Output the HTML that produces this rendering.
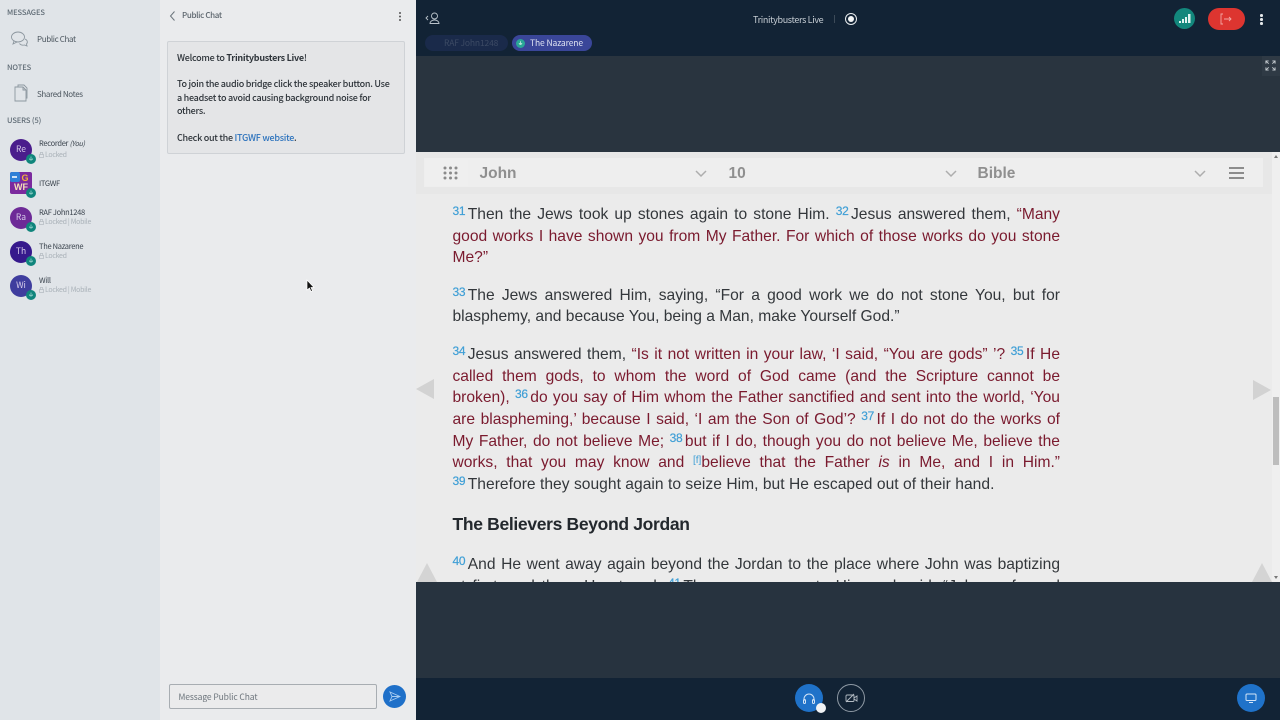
<!DOCTYPE html>
<html><head><meta charset="utf-8">
<style>
*{box-sizing:border-box}
html,body{margin:0;padding:0;width:1280px;height:720px;overflow:hidden;background:#06172a}
body{font-family:"Noto Sans CJK SC","Liberation Sans",sans-serif;position:relative}
.a{position:absolute;white-space:nowrap}
#side{position:absolute;left:0;top:0;width:160px;height:720px;background:#e0e4e8}
#chat{position:absolute;left:160px;top:0;width:256px;height:720px;background:#eaebed}
#top{position:absolute;left:416px;top:0;width:864px;height:56px;background:#122335}
#mid{position:absolute;left:416px;top:56px;width:864px;height:96px;background:#29343f}
#pres{position:absolute;left:416px;top:152px;width:864px;height:430px;background:#ebebeb;overflow:hidden}
#low{position:absolute;left:416px;top:582px;width:864px;height:96px;background:#27333f}
#bot{position:absolute;left:416px;top:678px;width:864px;height:42px;background:#122335}
.h{font-size:7.5px;color:#5f6b75;font-weight:500;letter-spacing:-.1px;margin-top:-1px}
.n{font-size:7.5px;color:#39424c;letter-spacing:-.3px;margin-top:-1px}
.l{font-size:7px;color:#a9b1b8;letter-spacing:-.3px;margin-top:-1px}
.l svg{vertical-align:-1px;margin-right:1px}
.m{font-size:8px;color:#4a545d;letter-spacing:-.35px}
.av{position:absolute;left:10px;width:22px;height:22px;border-radius:50%;color:#d8cdea;font-size:8.5px;text-align:center;line-height:21px}
.bd{position:absolute;left:25.5px;width:10px;height:10px}
.v{position:absolute;left:36.5px;width:607.5px;height:22px;line-height:22px;margin-top:-1px;font-family:"Liberation Sans",sans-serif;font-size:15.6px;text-align:justify;text-align-last:justify;white-space:nowrap;color:#33373b}
.v.e{text-align-last:left}
.r{color:#7a1a2e}
.s{color:#3f9fd6;font-size:12px;letter-spacing:-.3px;vertical-align:4px;line-height:0;margin-right:2.5px;-webkit-text-stroke:.2px #3f9fd6}
.sel{position:absolute;top:8px;height:26px;background:#eeeeee;font-family:"Liberation Sans",sans-serif;font-weight:700;font-size:15.5px;color:#8f8f8f;line-height:27px;padding-left:8.5px}
</style></head>
<body>
<div id="side">
<div class="a h" style="left:7px;top:7.5px">MESSAGES</div>
<svg class="a" style="left:10px;top:30px" width="20" height="18" viewBox="0 0 20 18" fill="none" stroke="#8d979f" stroke-width=".9"><ellipse cx="8" cy="7" rx="6.5" ry="5"/><path d="M4 11l-1 3 4-2"/><path d="M15 9c2.5 1 3 3.5 1.5 5l.5 2-2.5-1c-2 .5-4-.2-5-1.5"/></svg>
<div class="a m" style="left:37px;top:33.5px">Public Chat</div>
<div class="a h" style="left:7px;top:63px">NOTES</div>
<svg class="a" style="left:13px;top:84px" width="16" height="18" viewBox="0 0 16 18" fill="none" stroke="#8d979f" stroke-width=".9"><path d="M2 3h8l3 3v11H2z"/><path d="M5 3V1h6l3 3v10h-1"/><path d="M10 3v3h3"/></svg>
<div class="a m" style="left:37px;top:89px">Shared Notes</div>
<div class="a h" style="left:7px;top:115.5px">USERS (5)</div>

<div class="av" style="top:138.5px;background:#4a1d8c">Re</div>
<svg class="bd" style="top:153.5px" viewBox="0 0 10 10"><circle cx="5" cy="5" r="5" fill="#10857c"/><path d="M3.5 4.500a1.500 1.500 0 0 0 3 0M5 2.500v3.500" stroke="#a8dcd6" stroke-width=".7" fill="none"/></svg>
<div class="a n" style="left:39px;top:138.5px">Recorder <i style="font-size:7px">(You)</i></div>
<div class="a l" style="left:39px;top:151px"><svg width="5" height="6" viewBox="0 0 5 6" fill="none" stroke="#a9b1b8" stroke-width=".6"><rect x=".5" y="2.500" width="4" height="3"/><path d="M1.200 2.500V1.500a1.300 1.300 0 0 1 2.600 0v1"/></svg>Locked</div>

<div class="a" style="left:10px;top:172px;width:22px;height:22px;background:#7b2a9e;border-radius:2px;color:#f2b33a;font:700 9px/9px 'Liberation Sans',sans-serif;text-align:center;padding-top:2px"><span style="padding-left:8px">G</span><br><span style="color:#f6e3b8">WF</span></div>
<div class="a" style="left:9.5px;top:171.5px;width:10px;height:10px;background:#2f7fd6;border-radius:2px"></div><div class="a" style="left:12px;top:175.5px;width:5px;height:2px;background:#cfe2f6"></div>
<svg class="bd" style="top:187.5px" viewBox="0 0 10 10"><circle cx="5" cy="5" r="5" fill="#10857c"/><path d="M3.5 4.500a1.500 1.500 0 0 0 3 0M5 2.500v3.500" stroke="#a8dcd6" stroke-width=".7" fill="none"/></svg>
<div class="a n" style="left:39px;top:178.5px">ITGWF</div>

<div class="av" style="top:206.5px;background:#6d2a97">Ra</div>
<svg class="bd" style="top:221.5px" viewBox="0 0 10 10"><circle cx="5" cy="5" r="5" fill="#10857c"/><path d="M3.5 4.500a1.500 1.500 0 0 0 3 0M5 2.500v3.500" stroke="#a8dcd6" stroke-width=".7" fill="none"/></svg>
<div class="a n" style="left:39px;top:207.5px">RAF John1248</div>
<div class="a l" style="left:39px;top:218px"><svg width="5" height="6" viewBox="0 0 5 6" fill="none" stroke="#a9b1b8" stroke-width=".6"><rect x=".5" y="2.500" width="4" height="3"/><path d="M1.200 2.500V1.500a1.300 1.300 0 0 1 2.600 0v1"/></svg>Locked | Mobile</div>

<div class="av" style="top:240.5px;background:#36198c">Th</div>
<svg class="bd" style="top:255.5px" viewBox="0 0 10 10"><circle cx="5" cy="5" r="5" fill="#10857c"/><path d="M3.5 4.500a1.500 1.500 0 0 0 3 0M5 2.500v3.500" stroke="#a8dcd6" stroke-width=".7" fill="none"/></svg>
<div class="a n" style="left:39px;top:241.5px">The Nazarene</div>
<div class="a l" style="left:39px;top:252px"><svg width="5" height="6" viewBox="0 0 5 6" fill="none" stroke="#a9b1b8" stroke-width=".6"><rect x=".5" y="2.500" width="4" height="3"/><path d="M1.200 2.500V1.500a1.300 1.300 0 0 1 2.600 0v1"/></svg>Locked</div>

<div class="av" style="top:274.5px;background:#3f3d9e">Wi</div>
<svg class="bd" style="top:289.5px" viewBox="0 0 10 10"><circle cx="5" cy="5" r="5" fill="#10857c"/><path d="M3.5 4.500a1.500 1.500 0 0 0 3 0M5 2.500v3.500" stroke="#a8dcd6" stroke-width=".7" fill="none"/></svg>
<div class="a n" style="left:39px;top:276px">Will</div>
<div class="a l" style="left:39px;top:286px"><svg width="5" height="6" viewBox="0 0 5 6" fill="none" stroke="#a9b1b8" stroke-width=".6"><rect x=".5" y="2.500" width="4" height="3"/><path d="M1.200 2.500V1.500a1.300 1.300 0 0 1 2.600 0v1"/></svg>Locked | Mobile</div>
</div>

<div id="chat">
<svg class="a" style="left:9px;top:10px" width="7" height="12" viewBox="0 0 7 12" fill="none" stroke="#6b747c"><path d="M5.500 1.500L1.500 6l4 4.500"/></svg>
<div class="a" style="left:22px;top:10px;font-size:8px;letter-spacing:-.35px;color:#5b646c;font-weight:500">Public Chat</div>
<div class="a" style="left:239px;top:12px;width:2px;height:2px;background:#555;box-shadow:0 3.5px 0 #555,0 7px 0 #555;border-radius:50%"></div>
<div class="a" style="left:7px;top:41px;width:238px;height:113px;background:#e4e5e7;border:1px solid #cfd2d6;border-radius:2px"></div>
<div class="a" style="left:17px;top:50.5px;font-size:9px;letter-spacing:-.27px;line-height:13.4px;color:#2e343a;font-weight:500">Welcome to <b>Trinitybusters Live</b>!<br><br>To join the audio bridge click the speaker button. Use<br>a headset to avoid causing background noise for<br>others.<br><br>Check out the <span style="color:#2d73bd">ITGWF website</span>.</div>
<div class="a" style="left:9px;top:684px;width:208px;height:25px;background:#ebebec;border:1.5px solid #a8adb2;border-radius:2px;font-size:8.5px;letter-spacing:-.1px;line-height:24px;color:#6d757c;padding-left:8.5px">Message Public Chat</div>
<div class="a" style="left:223px;top:685px;width:23px;height:23px;border-radius:50%;background:#1f70c9"></div>
<svg class="a" style="left:229px;top:691px" width="12" height="11" viewBox="0 0 12 11" fill="none" stroke="#a9cdf2" stroke-width=".9"><path d="M1 1l10 4.500L1 10l2-4.500zM3 5.500h8"/></svg>
</div>

<div id="top">
<svg class="a" style="left:9px;top:11px" width="16" height="14" viewBox="0 0 16 14" fill="none" stroke="#b9c2ca" stroke-width=".9"><path d="M3 5L1 7l2 2"/><circle cx="9.5" cy="5" r="3"/><path d="M5 12.500c0-2 2-3.500 4.500-3.500s4.500 1.500 4.500 3.500z"/></svg>
<div class="a" style="left:337px;top:13px;font-size:9px;letter-spacing:-.35px;color:#c5ccd3">Trinitybusters Live</div>
<div class="a" style="left:418px;top:15px;width:1px;height:8px;background:#3c4a58"></div>
<div class="a" style="left:429px;top:13px;width:12px;height:12px;border-radius:50%;border:1.5px solid #e8ecef"></div>
<div class="a" style="left:432px;top:16px;width:6px;height:6px;border-radius:50%;background:#f3f5f6"></div>
<div class="a" style="left:9px;top:35px;width:83px;height:16px;border-radius:8px;background:#1a2a4a;font-size:8.5px;letter-spacing:-.15px;line-height:16px;color:#3c4a64;padding-left:19px">RAF John1248</div>
<div class="a" style="left:95.5px;top:35px;width:80.5px;height:16px;border-radius:8px;background:#3a4699;font-size:8.5px;letter-spacing:-.1px;line-height:16px;color:#dfe3f2;padding-left:18.5px">The Nazarene</div>
<svg class="a" style="left:100px;top:39px" width="9" height="9" viewBox="0 0 10 10"><circle cx="5" cy="5" r="5" fill="#2aa796"/><path d="M3.5 4.500a1.500 1.500 0 0 0 3 0M5 2.500v3.500" stroke="#d5f0ec" stroke-width=".8" fill="none"/></svg>
<div class="a" style="left:758px;top:8px;width:21px;height:21px;border-radius:50%;background:#12877c"></div>
<svg class="a" style="left:762px;top:13px" width="13" height="12" viewBox="0 0 13 12" fill="#dff3f0"><rect x="1" y="8" width="2" height="2"/><rect x="4" y="6" width="2" height="4"/><rect x="7" y="4" width="2" height="6"/><rect x="10" y="1" width="2.5" height="9"/></svg>
<div class="a" style="left:792px;top:8px;width:37px;height:22px;border-radius:11px;background:#dd3530"></div>
<svg class="a" style="left:803px;top:13px" width="15" height="12" viewBox="0 0 15 12" fill="none" stroke="#f3a7a4" stroke-width=".9"><path d="M4 1H2v10h2M5 6h7M10 4l2 2-2 2"/></svg>
<div class="a" style="left:844px;top:14px;width:2.5px;height:2.5px;border-radius:50%;background:#e3e7ea;box-shadow:0 4px 0 #e3e7ea,0 8px 0 #e3e7ea"></div>
</div>

<div id="mid">
<div class="a" style="left:846px;top:0;width:18px;height:20px;background:#2f3a45"></div>
<svg class="a" style="left:849px;top:4px" width="11" height="11" viewBox="0 0 12 12" fill="none" stroke="#c6ccd1" stroke-width="1"><path d="M1 4V1h3M8 1h3v3M11 8v3H8M4 11H1V8M1 1l3 3M11 1L8 4M11 11L8 8M1 11l3-3"/></svg>
</div>

<div id="pres">
<div class="a" style="left:0;top:0;width:856px;height:42px;background:#e7e7e7"></div>
<div class="a" style="left:8px;top:6px;width:839px;height:29px;background:#eeeeee"></div>
<div class="a" style="left:9px;top:8px;width:43px;height:26px;background:#efefef"></div>
<svg class="a" style="left:26px;top:14px" width="17" height="14" viewBox="0 0 17 14" fill="#8a8a8a"><circle cx="3" cy="2" r="1.5"/><circle cx="8.5" cy="2" r="1.5"/><circle cx="14" cy="2" r="1.5"/><circle cx="3" cy="7" r="1.5"/><circle cx="8.5" cy="7" r="1.5"/><circle cx="14" cy="7" r="1.5"/><circle cx="3" cy="12" r="1.5"/><circle cx="8.5" cy="12" r="1.5"/><circle cx="14" cy="12" r="1.5"/></svg>
<div class="sel" style="left:55px;width:246px">John</div>
<div class="sel" style="left:304px;width:246px">10</div>
<div class="sel" style="left:553px;width:248px">Bible</div>
<svg class="a" style="left:279px;top:17.5px" width="12" height="8" viewBox="0 0 12 8" fill="none" stroke="#adadad" stroke-width="1.5"><path d="M1 1l5 5 5-5"/></svg>
<svg class="a" style="left:529px;top:17.5px" width="12" height="8" viewBox="0 0 12 8" fill="none" stroke="#adadad" stroke-width="1.5"><path d="M1 1l5 5 5-5"/></svg>
<svg class="a" style="left:778px;top:17.5px" width="12" height="8" viewBox="0 0 12 8" fill="none" stroke="#adadad" stroke-width="1.5"><path d="M1 1l5 5 5-5"/></svg>
<div class="a" style="left:813px;top:15px;width:15px;height:2px;background:#8c8c8c;box-shadow:0 5px 0 #8c8c8c,0 10px 0 #8c8c8c"></div>

<div class="v" style="top:52.5px"><span class="s">31</span>Then the Jews took up stones again to stone Him. <span class="s">32</span>Jesus answered them, <span class="r">“Many</span></div>
<div class="v r" style="top:74.5px">good works I have shown you from My Father. For which of those works do you stone</div>
<div class="v r e" style="top:96px">Me?”</div>
<div class="v" style="top:133.5px"><span class="s">33</span>The Jews answered Him, saying, “For a good work we do not stone You, but for</div>
<div class="v e" style="top:155px">blasphemy, and because You, being a Man, make Yourself God.”</div>
<div class="v" style="top:192.5px"><span class="s">34</span>Jesus answered them, <span class="r">“Is it not written in your law, ‘I said, “You are gods” ’?</span> <span class="s">35</span><span class="r">If He</span></div>
<div class="v r" style="top:214.5px">called them gods, to whom the word of God came (and the Scripture cannot be</div>
<div class="v r" style="top:236px">broken), <span class="s">36</span>do you say of Him whom the Father sanctified and sent into the world, ‘You</div>
<div class="v r" style="top:257.5px">are blaspheming,’ because I said, ‘I am the Son of God’? <span class="s">37</span>If I do not do the works of</div>
<div class="v r" style="top:279.5px">My Father, do not believe Me; <span class="s">38</span>but if I do, though you do not believe Me, believe the</div>
<div class="v r" style="top:301px">works, that you may know and <span class="s" style="font-size:10px;margin:0;-webkit-text-stroke:0;letter-spacing:0">[f]</span>believe that the Father <i>is</i> in Me, and I in Him.”</div>
<div class="v e" style="top:322.5px;letter-spacing:.03px"><span class="s">39</span>Therefore they sought again to seize Him, but He escaped out of their hand.</div>
<div class="a" style="left:36.5px;top:360px;font-family:'Liberation Sans',sans-serif;font-weight:700;font-size:17.5px;line-height:24px;color:#23282d;letter-spacing:-.33px">The Believers Beyond Jordan</div>
<div class="v" style="top:402.5px"><span class="s">40</span>And He went away again beyond the Jordan to the place where John was baptizing</div>
<div class="v" style="top:424.5px">at first, and there He stayed. <span class="s">41</span>Then many came to Him and said, “John performed</div>

<svg class="a" style="left:0;top:226px" width="20" height="22"><path d="M0 11L18 1v20z" fill="#d2d2d2"/></svg>
<svg class="a" style="left:836px;top:227px" width="20" height="22"><path d="M19 11L1 1v20z" fill="#d2d2d2"/></svg>
<svg class="a" style="left:0;top:410px" width="22" height="20"><path d="M11 1L1 20h20z" fill="#d4d4d4"/></svg>
<svg class="a" style="left:835px;top:410px" width="22" height="20"><path d="M11 1L1 20h20z" fill="#d4d4d4"/></svg>
<div class="a" style="left:856px;top:0;width:8px;height:430px;background:#efefef"></div>
<div class="a" style="left:857px;top:245px;width:6px;height:68px;background:#bdbdbd"></div>
<svg class="a" style="left:858px;top:3px" width="4" height="4"><path d="M2 0l2 3H0z" fill="#777"/></svg>
<svg class="a" style="left:858px;top:424px" width="4" height="4"><path d="M2 3L0 0h4z" fill="#777"/></svg>
</div>

<div id="low"></div>
<div id="bot">
<div class="a" style="left:379px;top:6px;width:28px;height:28px;border-radius:50%;background:#1f72c9"></div>
<svg class="a" style="left:386px;top:14px" width="14" height="13" viewBox="0 0 14 13" fill="none" stroke="#d4e5f7" stroke-width="1"><path d="M2 9V7a5 5 0 0 1 10 0v2"/><rect x="1.5" y="7.5" width="2" height="4" rx="1"/><rect x="10.5" y="7.5" width="2" height="4" rx="1"/></svg>
<div class="a" style="left:400px;top:25px;width:10px;height:10px;border-radius:50%;background:#f1f3f5"></div>
<div class="a" style="left:421px;top:6px;width:28px;height:28px;border-radius:50%;border:1px solid #8e99a4"></div>
<svg class="a" style="left:429px;top:15px" width="13" height="10" viewBox="0 0 13 10" fill="none" stroke="#b4bcc4" stroke-width=".9"><rect x="1" y="2" width="8" height="6.5" rx="1"/><path d="M9 5l3-2v5l-3-2M1 9l8-8"/></svg>
<div class="a" style="left:821px;top:6px;width:28px;height:28px;border-radius:50%;background:#1f72c9"></div>
<svg class="a" style="left:829px;top:15px" width="12" height="10" viewBox="0 0 12 10" fill="none" stroke="#d4e5f7" stroke-width="1"><rect x="1" y="1" width="10" height="6.5" rx="1"/><path d="M4 9.5h4"/></svg>
</div>
<svg class="a" style="left:306px;top:279px" width="9" height="14" viewBox="0 0 9 14"><path d="M1 1v10l2.500-2 1.500 3.500 1.500-.7L5 8.500h3z" fill="#111" stroke="#fff" stroke-width=".7"/></svg>
</body></html>
